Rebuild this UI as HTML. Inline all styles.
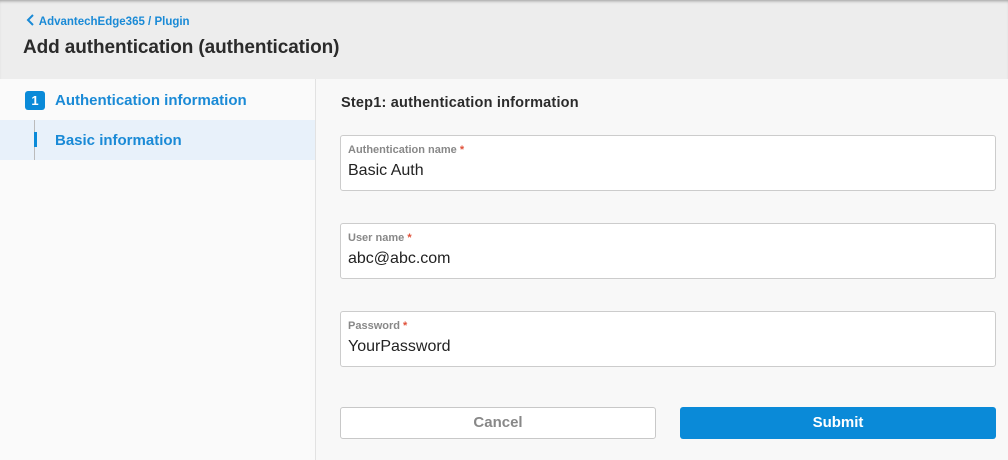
<!DOCTYPE html>
<html><head><style>
*{box-sizing:border-box;margin:0;padding:0}
body{width:1008px;height:460px;overflow:hidden;font-family:"Liberation Sans",sans-serif;background:#f8f8f8;position:relative}
.hdr{position:absolute;left:0;top:0;width:1008px;height:79px;background:#ededed;box-shadow:inset 0 3px 3px -2px #999}
.crumb{position:absolute;left:26px;top:14px;font-size:11.5px;font-weight:bold;color:#1a8ad6}
.title{position:absolute;left:23px;top:37px;font-size:19px;font-weight:bold;color:#2b2b2b;letter-spacing:-0.1px}
.side{position:absolute;left:0;top:79px;width:316px;height:381px;background:#fafafa;border-right:1px solid #e2e2e2}
.num{position:absolute;left:25px;top:12px;width:20px;height:19px;background:#0a8ad8;border-radius:3px;color:#fff;font-size:13px;font-weight:bold;text-align:center;line-height:19px}
.s1{position:absolute;left:55px;top:13px;font-size:15px;font-weight:bold;color:#1a8ad6}
.sel{position:absolute;left:0;top:41px;width:315px;height:40px;background:#e8f1fa}
.vl{position:absolute;left:34px;top:41px;width:1px;height:40px;background:#bbb}
.bar{position:absolute;left:34px;top:53px;width:3px;height:15px;background:#0a8ad8}
.s2{position:absolute;left:55px;top:53px;font-size:15px;font-weight:bold;color:#1a8ad6}
.h2{position:absolute;left:341px;top:95px;font-size:14.5px;font-weight:bold;color:#2b2b2b;letter-spacing:0.2px}
.f{position:absolute;left:340px;width:656px;height:56px;background:#fff;border:1px solid #ccc;border-radius:3px}
.f .l{position:absolute;left:7px;top:8px;font-size:11px;font-weight:bold;color:#888}
.f .l b{color:#e0513a}
.f .v{position:absolute;left:7px;top:26px;font-size:16px;color:#222}
.btn{position:absolute;top:407px;height:32px;width:316px;border-radius:3px;font-size:15px;font-weight:bold;text-align:center;line-height:30px}
</style></head><body>
<div class="hdr">
<div class="crumb"><svg width="10" height="12" viewBox="0 0 10 12" style="vertical-align:-1px"><path d="M7 1L2 6l5 5" fill="none" stroke="#1a8ad6" stroke-width="2"/></svg> AdvantechEdge365 / Plugin</div>
<div class="title">Add authentication (authentication)</div>
</div>
<div class="side">
<div class="num">1</div><div class="s1">Authentication information</div>
<div class="sel"></div><div class="vl"></div><div class="bar"></div>
<div class="s2">Basic information</div>
</div>
<div class="h2">Step1: authentication information</div>
<div class="f" style="top:135px"><div class="l">Authentication name <b>*</b></div><div class="v">Basic Auth</div></div>
<div class="f" style="top:223px"><div class="l">User name <b>*</b></div><div class="v">abc@abc.com</div></div>
<div class="f" style="top:311px"><div class="l">Password <b>*</b></div><div class="v">YourPassword</div></div>
<div class="btn" style="left:340px;background:#fff;border:1px solid #c8c8c8;color:#888">Cancel</div>
<div class="btn" style="left:680px;background:#0a8ad8;color:#fff;line-height:32px">Submit</div>
</body></html>
